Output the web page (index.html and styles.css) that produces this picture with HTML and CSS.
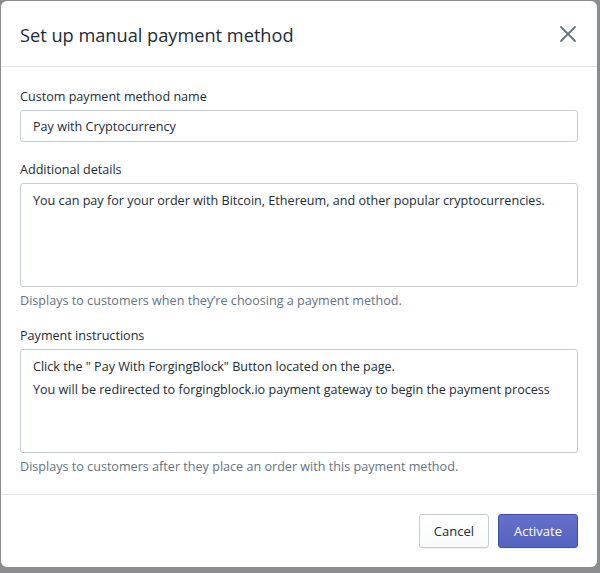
FILE: index.html
```html
<!DOCTYPE html>
<html>

<head>
  <link rel="stylesheet" href="styles.css">
  <title>Set up manual payment method</title>
</head>
<body>
  <div class="modal">
    <div class="modal-header">
      <h2 class="modal-title">Set up manual payment method</h2>
      <button class="close-button" aria-label="Close">
        <svg width="20" height="20" viewBox="0 0 20 20">
          <path d="M3 3 L17 17 M17 3 L3 17" stroke="#637381" stroke-width="1.8" stroke-linecap="round" fill="none"/>
        </svg>
      </button>
    </div>
    <div class="modal-body">
      <div class="field field-name">
        <label for="method_name">Custom payment method name</label>
        <input type="text" id="method_name" value="Pay with Cryptocurrency">
      </div>
      <div class="field">
        <label for="details">Additional details</label>
        <textarea id="details" rows="4" wrap="off">You can pay for your order with Bitcoin, Ethereum, and other popular cryptocurrencies.</textarea>
        <div class="help-text">Displays to customers when they’re choosing a payment method.</div>
      </div>
      <div class="field">
        <label for="instructions">Payment instructions</label>
        <textarea id="instructions" rows="4" wrap="off">Click the " Pay With ForgingBlock" Button located on the page.
You will be redirected to forgingblock.io payment gateway to begin the payment process</textarea>
        <div class="help-text">Displays to customers after they place an order with this payment method.</div>
      </div>
    </div>
    <div class="modal-footer">
      <button id="cancel" class="btn">Cancel</button>
      <button id="activate" class="btn btn-primary">Activate</button>
    </div>
  </div>
</body>

</html>
```

FILE: styles.css
```css
body {
  margin: 0;
  padding: 1px 3px 6px 1px;
  background-color: #8a8c8f;
  font-family: "Open Sans", "Noto Sans", sans-serif;
  font-size: 12.6px;
  color: #212b36;
}

.modal {
  width: 596px;
  height: 566px;
  background-color: #fff;
  border-radius: 6px;
  display: flex;
  flex-direction: column;
  box-sizing: border-box;
}

.modal-header {
  height: 66px;
  display: flex;
  align-items: center;
  justify-content: space-between;
  padding: 0 19px;
  border-bottom: 1px solid #dfe3e8;
  box-sizing: border-box;
}

.modal-title {
  margin: 0;
  font-size: 18.2px;
  font-weight: normal;
  color: #212b36;
  padding-top: 2px;
}

.close-button {
  background: none;
  border: none;
  padding: 0;
  width: 20px;
  height: 20px;
  cursor: pointer;
}

.modal-body {
  padding: 20px 19px 17px 19px;
  display: flex;
  flex-direction: column;
  gap: 15px;
  border-bottom: 1px solid #dfe3e8;
}

.field {
  display: flex;
  flex-direction: column;
}

.field-name {
  margin-bottom: 3px;
}

label {
  display: block;
  line-height: 20px;
  margin-bottom: 3px;
}

input[type="text"],
textarea {
  font-family: inherit;
  font-size: 12.6px;
  color: #212b36;
  border: 1px solid #c4cdd5;
  border-radius: 3px;
  box-sizing: border-box;
  width: 100%;
  padding: 0 12px;
  margin: 0;
  outline: none;
}

input[type="text"] {
  height: 32px;
}

textarea {
  height: 104px;
  line-height: 23px;
  padding-top: 5px;
  resize: none;
  overflow: hidden;
  white-space: pre;
}

.help-text {
  color: #637381;
  line-height: 20px;
  margin-top: 4px;
}

.modal-footer {
  flex: 1;
  display: flex;
  justify-content: flex-end;
  align-items: center;
  gap: 9px;
  padding: 0 19px;
}

.btn {
  height: 34px;
  padding: 0 14px;
  font-family: inherit;
  font-size: 13px;
  color: #212b36;
  background: linear-gradient(to bottom, #fff, #f9fafb);
  border: 1px solid #c4cdd5;
  border-radius: 3px;
  box-shadow: 0 1px 0 rgba(22, 29, 37, 0.05);
  cursor: pointer;
}

.btn-primary {
  color: #fff;
  background: linear-gradient(to bottom, #6371c7, #5563c1);
  border-color: #3f4eae;
  padding: 0 15px;
}
```
